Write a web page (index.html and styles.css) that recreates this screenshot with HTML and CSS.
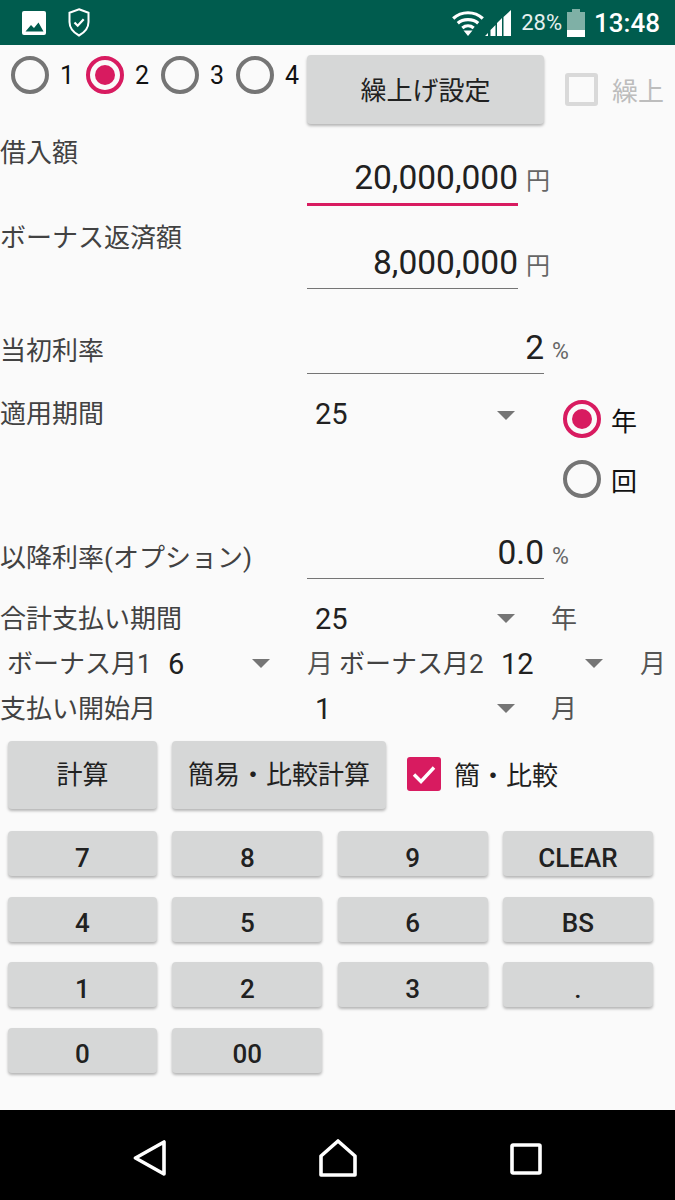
FILE: index.html
```html
<!DOCTYPE html>
<html lang="ja">
<head>
<meta charset="utf-8">
<title>ローン計算</title>
<link rel="stylesheet" href="styles.css">
</head>
<body>
<div class="screen">
  <header class="status">
    <div class="status-left">
      <svg class="ic-pic" viewBox="0 0 24 24"><path fill="#fff" d="M2 0h20a2 2 0 0 1 2 2v20a2 2 0 0 1-2 2H2a2 2 0 0 1-2-2V2a2 2 0 0 1 2-2z"/><path fill="#005c4e" d="M3.500 20.500L9 14l3 3 4.500-5.500 5 9z"/></svg>
      <svg class="ic-shield" viewBox="0 0 22 29"><path fill="none" stroke="#fff" stroke-width="2" d="M11 1.200l9.500 3.600v9.200c0 6-4 10.500-9.500 13.500C5.500 24.500 1.500 20 1.500 14V4.800z"/><path fill="none" stroke="#fff" stroke-width="2.200" d="M6.500 14.500l3.200 3.200 6-6.400"/></svg>
    </div>
    <div class="status-right">
      <svg class="ic-wifi" viewBox="0 0 32 26"><path fill="none" stroke="#fff" stroke-width="3.200" d="M1.200 8.500C9.500 0.800 22.500 0.800 30.800 8.500M5.800 13.300C11 8.500 21 8.500 26.200 13.300M10.300 18c3.400-2.800 8-2.800 11.400 0"/><path fill="#fff" d="M11.500 20.500h9L16 26z"/></svg>
      <svg class="ic-signal" viewBox="0 0 26 26"><path fill="#fff" d="M0 26l3-3v3zM5.500 26v-6l5-5v11zM12 26V13l5-5v18zM18.500 26V7L26 0v26z"/></svg>
      <span class="pct">28%</span>
      <svg class="ic-batt" viewBox="0 0 18 28"><path fill="#7fb0a6" d="M5 0h8v3h5v25H0V3h5z"/><path fill="#fff" d="M0 21h18v7H0z"/></svg>
      <span class="clock">13:48</span>
    </div>
  </header>

  <main class="content">
    <section class="row-top">
      <div class="radios">
        <label class="radio"><i class="dot"></i><span>1</span></label>
        <label class="radio"><i class="dot on"></i><span>2</span></label>
        <label class="radio"><i class="dot"></i><span>3</span></label>
        <label class="radio"><i class="dot"></i><span>4</span></label>
      </div>
      <button class="btn btn-round">繰上げ設定</button>
      <label class="check-off"><i class="box"></i><span>繰上</span></label>
    </section>

    <section class="field h85">
      <div class="lbl lbl-amt">借入額</div>
      <div class="val w211 active">20,000,000</div>
      <div class="unit">円</div>
    </section>
    <section class="field h85">
      <div class="lbl lbl-amt">ボーナス返済額</div>
      <div class="val w211">8,000,000</div>
      <div class="unit">円</div>
    </section>
    <section class="field h85">
      <div class="lbl lbl-rate">当初利率</div>
      <div class="val w237 val-rate">2</div>
      <div class="unit small">%</div>
    </section>

    <section class="term">
      <div class="lbl lbl-term">適用期間</div>
      <div class="select w210">25</div>
      <div class="term-radios">
        <label class="radio2"><i class="dot on"></i><span>年</span></label>
        <label class="radio2"><i class="dot"></i><span>回</span></label>
      </div>
    </section>

    <section class="field later">
      <div class="lbl lbl-rate">以降利率(オプション)</div>
      <div class="val w237 val-rate">0.0</div>
      <div class="unit small">%</div>
    </section>

    <section class="line">
      <div class="lbl w307">合計支払い期間</div>
      <div class="select w210">25</div>
      <span class="u">年</span>
    </section>
    <section class="line bonus">
      <div class="lbl w168 ind">ボーナス月1</div>
      <div class="select w139">6</div>
      <span class="u u-a">月</span>
      <span class="lbl lbl-b2">ボーナス月2</span>
      <div class="select w139">12</div>
      <span class="u u-c">月</span>
    </section>
    <section class="line">
      <div class="lbl w307">支払い開始月</div>
      <div class="select w210">1</div>
      <span class="u">月</span>
    </section>

    <section class="actions">
      <button class="btn btn-calc">計算</button>
      <button class="btn btn-cmp">簡易・比較計算</button>
      <label class="check-on">
        <svg class="tick" viewBox="0 0 34 34"><rect width="34" height="34" rx="3" fill="#d81b60"/><path d="M7 17.500l7 7 13-14" fill="none" stroke="#fff" stroke-width="3.400"/></svg>
        <span>簡・比較</span>
      </label>
    </section>

    <section class="keys">
      <button class="btn key">7</button>
      <button class="btn key">8</button>
      <button class="btn key">9</button>
      <button class="btn key">CLEAR</button>
      <button class="btn key">4</button>
      <button class="btn key">5</button>
      <button class="btn key">6</button>
      <button class="btn key">BS</button>
      <button class="btn key">1</button>
      <button class="btn key">2</button>
      <button class="btn key">3</button>
      <button class="btn key">.</button>
      <button class="btn key">0</button>
      <button class="btn key">00</button>
    </section>
  </main>

  <footer class="nav">
    <svg class="nav-back" viewBox="0 0 34 36"><path d="M2.500 18L31 2v32z" fill="none" stroke="#fff" stroke-width="3.600" stroke-linejoin="round"/></svg>
    <svg class="nav-home" viewBox="0 0 38 38"><path d="M2 36V17L19 2l17 15v19z" fill="none" stroke="#fff" stroke-width="3.600" stroke-linejoin="round"/></svg>
    <svg class="nav-recent" viewBox="0 0 32 32"><rect x="2" y="2" width="28" height="28" rx="1" fill="none" stroke="#fff" stroke-width="3.600"/></svg>
  </footer>
</div>
</body>
</html>
```
FILE: styles.css
```css
* { box-sizing: border-box; }
html, body { margin: 0; padding: 0; }
body { font-family: Roboto, "Noto Sans CJK JP", sans-serif; background: #fafafa; color: #212121; }
.screen { width: 675px; height: 1200px; display: flex; flex-direction: column; overflow: hidden; }

.status { height: 45px; background: #005c4e; display: flex; justify-content: space-between; align-items: center; color: #fff; padding: 0 15px 0 22px; flex: none; }
.status-left, .status-right { display: flex; align-items: center; }
.ic-pic { width: 24px; height: 24px; }
.ic-shield { width: 22px; height: 29px; margin-left: 22px; }
.ic-wifi { width: 32px; height: 26px; }
.ic-signal { width: 26px; height: 26px; margin-left: 1px; }
.pct { font-size: 22px; margin-left: 10px; color: #e6f0ee; }
.ic-batt { width: 18px; height: 28px; margin-left: 5px; }
.clock { font-size: 26px; font-weight: 500; margin-left: 9px; }

.content { flex: 1; display: flex; flex-direction: column; min-height: 0; }

.dot { display: block; width: 38px; height: 38px; border-radius: 50%; border: 4px solid #757575; background: #fafafa; flex: none; position: relative; }
.dot.on { border-color: #d81b60; }
.dot.on::after { content: ""; position: absolute; inset: 5px; border-radius: 50%; background: #d81b60; }

.row-top { height: 85px; display: flex; align-items: flex-start; flex: none; }
.radios { display: flex; padding: 11px 0 0 11px; width: 307px; flex: none; }
.radio { display: flex; align-items: center; width: 75px; flex: none; color: #111; font-size: 25px; }
.radio span { margin-left: 11px; }
.btn { border: 0; background: #d6d7d7; border-radius: 4px; box-shadow: 0 2px 3px rgba(0,0,0,.28); color: #212121; font-family: inherit; padding: 0; display: block; }
.btn-round { width: 237px; height: 69px; margin-top: 10px; padding-bottom: 2px; font-size: 26px; }
.check-off { display: flex; align-items: center; margin: 26px 0 0 21px; color: #bdbdbd; font-size: 26px; }
.box { display: block; width: 33px; height: 33px; border: 4px solid #d9d9d9; border-radius: 3px; margin-right: 14px; }

.field { display: flex; align-items: flex-start; flex: none; }
.h85 { height: 85px; }
.lbl { font-size: 26px; color: #424242; white-space: nowrap; }
.lbl-amt { width: 307px; padding-top: 2px; }
.lbl-rate { width: 307px; padding-top: 30px; }
.val { font-size: 33.5px; text-align: right; color: #212121; border-bottom: 1px solid #757575; height: 74px; padding: 28px 0 0; line-height: 40px; }
.w211 { width: 211px; height: 74px; }
.w237 { width: 237px; }
.val-rate { padding-top: 28px; }
.active { border-bottom: 3px solid #d81b60; height: 76px; }
.unit { font-size: 24px; color: #666; margin: 31px 0 0 8px; }
.unit.small { font-size: 23px; margin-top: 38px; }

.term { height: 130px; display: flex; align-items: flex-start; flex: none; }
.lbl-term { width: 307px; padding-top: 8px; }
.select { position: relative; height: 40px; line-height: 40px; font-size: 29px; color: #212121; padding-left: 8px; flex: none; }
.select::after { content: ""; position: absolute; right: 2px; top: 17px; border: 9px solid transparent; border-top-color: #757575; border-bottom: 0; }
.w210 { width: 210px; }
.w139 { width: 139px; padding-left: 0; }
.w139::after { right: 37px; }
.term .select { margin-top: 9px; }
.term-radios { margin: 15px 0 0 46px; display: flex; flex-direction: column; gap: 22px; }
.radio2 { display: flex; align-items: center; font-size: 26px; color: #111; }
.radio2 span { margin-left: 10px; }
.later { height: 79px; }
.later .lbl-rate { padding-top: 22px; }
.later .val { height: 64px; padding-top: 18px; }
.later .unit { margin-top: 28px; }

.line { height: 45px; display: flex; align-items: center; flex: none; }
.line .select { line-height: 44px; }
.w307 { width: 307px; }
.w168 { width: 168px; }
.ind { padding-left: 7px; }
.u { font-size: 26px; color: #555; margin-left: 34px; }
.u-a { margin-left: 0; width: 32px; }
.lbl-b2 { width: 162px; }
.u-c { margin-left: 0; }

.actions { display: flex; align-items: flex-start; padding: 12px 0 0 8px; height: 102px; flex: none; }
.btn-calc { width: 149px; height: 68px; font-size: 26px; padding-bottom: 5px; }
.btn-cmp { width: 214px; height: 68px; font-size: 26px; padding-bottom: 5px; margin-left: 15px; }
.check-on { display: flex; align-items: center; margin: 14px 0 0 21px; font-size: 26px; color: #212121; }
.tick { width: 34px; height: 34px; margin-right: 13px; }

.keys { display: grid; grid-template-columns: 149px 150px 150px 150px; column-gap: 15.3px; row-gap: 20.67px; padding-left: 8px; }
.key { height: 45px; font-size: 26px; font-weight: 500; padding-top: 8px; }

.nav { height: 90px; background: #000; flex: none; display: flex; align-items: flex-start; padding: 29px 0 0 133px; }
.nav-back { width: 34px; height: 36px; margin-top: 1px; }
.nav-home { width: 38px; height: 38px; margin-left: 152px; }
.nav-recent { width: 32px; height: 32px; margin-left: 153px; margin-top: 4px; }
```
